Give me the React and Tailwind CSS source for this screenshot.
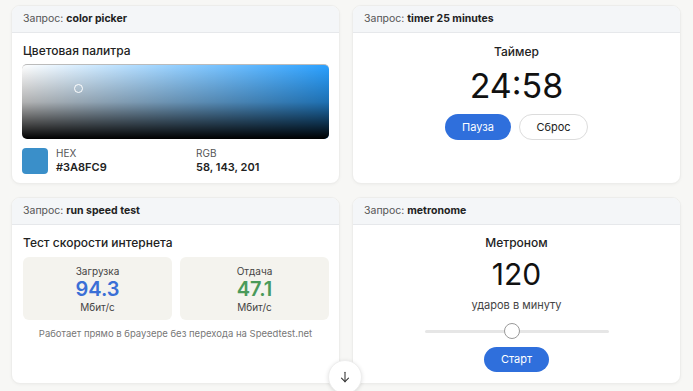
import React from "react";

function Header({ q }) {
  return (
    <div className="h-[27px] shrink-0 flex items-center px-[11px] bg-[#f4f6f8] border-b border-[#e6e8eb] text-[10.5px] text-[#555]">
      <span>Запрос:&nbsp;</span>
      <span className="font-bold text-[#222]">{q}</span>
    </div>
  );
}

function Card({ q, children, className = "" }) {
  return (
    <div className={"flex flex-col bg-white rounded-[9px] border border-[#ededeb] shadow-[0_1px_3px_rgba(0,0,0,0.04)] overflow-hidden " + className}>
      <Header q={q} />
      {children}
    </div>
  );
}

export default function App() {
  return (
    <div
      className="relative w-[693px] h-[391px] overflow-hidden bg-[#f7f7f5]"
      style={{ fontFamily: "Inter, 'Noto Sans', sans-serif" }}
    >
      <div className="grid grid-cols-2 gap-x-[12px] gap-y-[13px] pl-[11px] pr-[12px] pt-[5px]">
        <Card q="color picker" className="h-[179px]">
          <div className="px-[10px] pt-[11px]">
            <div className="text-[12px] font-medium text-[#222] leading-[14px] pl-[1px]">Цветовая палитра</div>
            <div className="relative mt-[6px] h-[75px] rounded-[5px] overflow-hidden border-t border-[#bbb]"
              style={{ background: "linear-gradient(to bottom, rgba(0,0,0,0) 0%, rgba(0,0,0,0.3) 50%, #000 100%), linear-gradient(to right, #fff, #2aa0ff)" }}>
              <div className="absolute left-[52px] top-[19px] w-[9px] h-[9px] rounded-full border-[1.5px] border-white" />
            </div>
            <div className="flex items-center mt-[8px]">
              <div className="w-[26px] h-[26px] rounded-[4px] bg-[#3A8FC9]" />
              <div className="ml-[8px] w-[140px]">
                <div className="text-[10px] text-[#555] leading-[12px]">HEX</div>
                <div className="text-[11px] font-semibold text-[#222] leading-[14px] mt-[1px]">#3A8FC9</div>
              </div>
              <div>
                <div className="text-[10px] text-[#555] leading-[12px]">RGB</div>
                <div className="text-[11px] font-semibold text-[#222] leading-[14px] mt-[1px]">58, 143, 201</div>
              </div>
            </div>
          </div>
        </Card>

        <Card q="timer 25 minutes" className="h-[179px]">
          <div className="flex flex-col items-center pt-[12px]">
            <div className="text-[12px] font-medium text-[#222] leading-[14px]">Таймер</div>
            <div className="text-[34px] text-[#111] leading-[38px] mt-[8px]">24:58</div>
            <div className="flex gap-[8px] mt-[9px]">
              <button className="w-[66px] h-[26px] rounded-full bg-[#2f6fdc] text-white text-[11px]">Пауза</button>
              <button className="w-[69px] h-[26px] rounded-full bg-white border border-[#dcdcdc] text-[#222] text-[11px]">Сброс</button>
            </div>
          </div>
        </Card>

        <Card q="run speed test" className="h-[187px]">
          <div className="px-[10px] pt-[11px]">
            <div className="text-[12px] font-medium text-[#222] leading-[14px] pl-[1px]">Тест скорости интернета</div>
            <div className="grid grid-cols-2 gap-[8px] mt-[7px] pl-[1px]">
              <div className="h-[63px] rounded-[6px] bg-[#f4f3ee] flex flex-col items-center justify-center">
                <div className="text-[10px] text-[#444] leading-[12px]">Загрузка</div>
                <div className="text-[20px] font-semibold text-[#3a6fd6] leading-[22px] mt-[1px]">94.3</div>
                <div className="text-[10px] text-[#444] leading-[12px] mt-[1px]">Мбит/с</div>
              </div>
              <div className="h-[63px] rounded-[6px] bg-[#f4f3ee] flex flex-col items-center justify-center">
                <div className="text-[10px] text-[#444] leading-[12px]">Отдача</div>
                <div className="text-[20px] font-semibold text-[#4a9a5a] leading-[22px] mt-[1px]">47.1</div>
                <div className="text-[10px] text-[#444] leading-[12px] mt-[1px]">Мбит/с</div>
              </div>
            </div>
            <div className="text-center text-[9.5px] text-[#777] mt-[8px] leading-[12px]">
              Работает прямо в браузере без перехода на Speedtest.net
            </div>
          </div>
        </Card>

        <Card q="metronome" className="h-[187px]">
          <div className="flex flex-col items-center pt-[11px]">
            <div className="text-[12px] font-medium text-[#222] leading-[14px]">Метроном</div>
            <div className="text-[30px] text-[#111] leading-[32px] mt-[8px]">120</div>
            <div className="text-[11px] text-[#444] leading-[13px] mt-[9px]">ударов в минуту</div>
            <div className="relative w-[184px] h-[18px] mt-[10px] flex items-center">
              <div className="w-full h-[3px] rounded-full bg-[#e6e6e6]" />
              <div className="absolute left-[79px] top-[1px] w-[16px] h-[16px] rounded-full bg-white border border-[#999]" />
            </div>
            <button className="mt-[7px] w-[65px] h-[25px] rounded-full bg-[#2f6fdc] text-white text-[11px]">Старт</button>
          </div>
        </Card>
      </div>

      <div className="absolute left-[328px] top-[360px] w-[34px] h-[34px] rounded-full bg-white shadow-[0_1px_4px_rgba(0,0,0,0.12)] border border-[#eee] flex items-center justify-center">
        <svg width="14" height="14" viewBox="0 0 24 24" fill="none" stroke="#333" strokeWidth="1.8" strokeLinecap="round" strokeLinejoin="round">
          <path d="M12 4v16" />
          <path d="M6 14l6 6 6-6" />
        </svg>
      </div>
    </div>
  );
}
